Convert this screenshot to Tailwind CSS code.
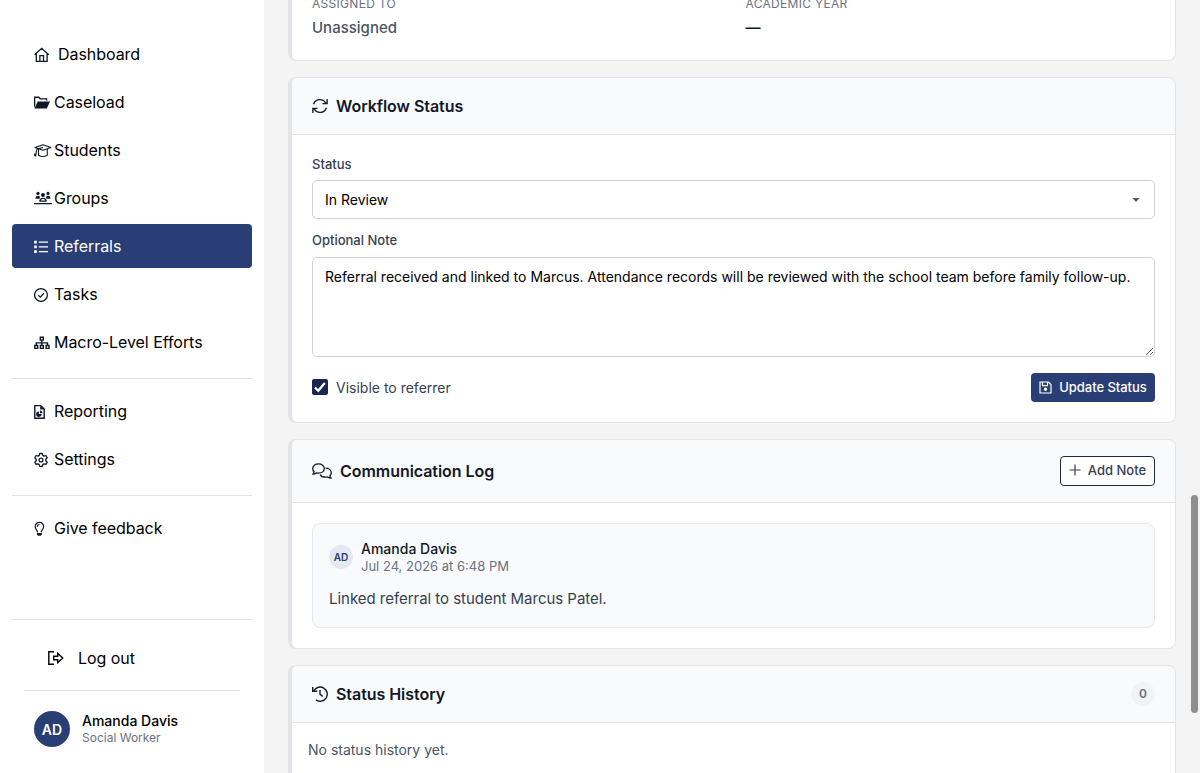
<!DOCTYPE html>
<html lang="en">

<head>
    <meta charset="UTF-8">
    <meta name="viewport" content="width=device-width, initial-scale=1.0">
    <title>Referrals</title>
    <script src="https://cdn.jsdelivr.net/npm/@tailwindcss/browser@4"></script>
</head>

<body class="h-screen overflow-hidden flex bg-[#f4f4f5] font-['Inter',sans-serif] text-[#111827]">
    <!-- sidebar -->
    <aside class="w-[264px] shrink-0 h-full bg-white px-3 pt-8 flex flex-col text-black">
        <nav class="flex flex-col gap-1 text-[16px] tracking-[-0.05px]">
            <a class="h-11 pl-[22px] flex items-center gap-2">
                <svg class="w-4 h-4 mt-px text-[#111827]" viewBox="0 0 16 16" fill="none" stroke="currentColor" stroke-width="1.3"><path d="M.6 7.700 7.700 1.300 14.800 7.700M2.300 6.500v7.800h10.800V6.500M5.900 14.200V8.700h3.600v5.500"/></svg>
                Dashboard
            </a>
            <a class="h-11 pl-[22px] flex items-center gap-1">
                <svg class="w-4 h-4 mt-px text-[#111827]" viewBox="0 0 16 16" fill="currentColor"><path d="M0 1.600h5l1.700 1.700h6.600v2.200H12V4.600H6.100L4.400 2.900H1.300v7.300L0 13z"/><path d="M3.700 6.400H16L12.800 13.600H.4z"/></svg>
                Caseload
            </a>
            <a class="h-11 pl-[22px] flex items-center gap-1">
                <svg class="w-[18px] h-4 mt-px -mr-0.5 text-[#111827]" viewBox="0 0 18 16" fill="none" stroke="currentColor" stroke-width="1.1" stroke-linejoin="round"><path d="M9 1.800 16.800 4.500 9 7.300 1 4.500zM4.500 6v6.300c2.600 1.500 6.200 1.500 8.800 0V6M9 4.500 3.200 6C2 7.600 2.300 10.500 1.600 13.300M.7 10.500v2.700"/></svg>
                Students
            </a>
            <a class="h-11 pl-[22px] flex items-center gap-1">
                <svg class="w-[18px] h-4 -mr-0.5 text-[#111827]" viewBox="0 0 18 16" fill="currentColor"><circle cx="4" cy="3.4" r="1.6"/><circle cx="14" cy="3.4" r="1.6"/><circle cx="9" cy="4.9" r="2"/><path d="M1.5 8.8c0-2 1-3 2.500-3 .9 0 1.500.3 1.900.8L5.700 8.800zM16.500 8.800c0-2-1-3-2.500-3-.9 0-1.500.3-1.900.8l.2 2.200zM0 13h18v1.300H0z"/><path fill-rule="evenodd" d="M5.200 11.700c0-2.600 1.400-4 3.800-4s3.800 1.400 3.800 4zM6.800 10.500h4.400c-.3-1-1-1.500-2.200-1.500s-1.900.5-2.200 1.500z"/></svg>
                Groups
            </a>
            <a class="h-11 pl-[22px] flex items-center gap-1 rounded-[4px] bg-[#293e75] text-white">
                <svg class="w-4 h-4 mt-px" viewBox="0 0 16 16" fill="currentColor"><path d="M.2 1.800h2.600v2.600H.2zM.2 6.600h2.600v2.600H.2zM.2 11.300h2.600v2.600H.2zM4.800 2.500H14v1.200H4.800zM4.800 7.300H14v1.200H4.800zM4.800 12H14v1.200H4.800z"/></svg>
                Referrals
            </a>
            <a class="h-11 pl-[22px] flex items-center gap-1">
                <svg class="w-4 h-4 mt-px text-[#111827]" viewBox="0 0 16 16" fill="none" stroke="currentColor" stroke-width="1.3"><circle cx="7" cy="8" r="6.400"/><path d="m4.200 8.100 2 2 3.700-3.800"/></svg>
                Tasks
            </a>
            <a class="h-11 pl-[22px] flex items-center gap-1">
                <svg class="w-4 h-4 mt-px text-[#111827]" viewBox="0 0 16 16" fill="none" stroke="currentColor" stroke-width="1.400"><path d="M6.300 2.200h3v2.900h-3zM.8 10.500h2.900v2.900H.8zM6.400 10.500h2.900v2.900H6.400zM12.100 10.500H15v2.900h-2.900zM7.800 5.100v5.400M2.300 10.500V7.900h11.200v2.600"/></svg>
                Macro-Level Efforts
            </a>
            <hr class="mt-2.5 mb-1.5 border-[#e2e3e5]">
            <a class="h-11 pl-[22px] flex items-center gap-1">
                <svg class="w-4 h-4 mt-px text-[#111827]" viewBox="0 0 16 16" fill="none" stroke="currentColor" stroke-width="1.400"><path d="M.8 1.600h6L10.200 5v9.200H.8z"/><path fill="currentColor" stroke="none" d="M6.200 1.200 10.600 5.600H6.200zM4.900 7.500v2.600h2.700A2.700 2.700 0 1 1 4.900 7.500zM5.900 6.500a2.700 2.700 0 0 1 2.600 2.700H5.900z"/></svg>
                Reporting
            </a>
            <a class="h-11 pl-[22px] flex items-center gap-1">
                <svg class="w-4 h-4 mt-px text-[#111827]" viewBox="0 0 16 16" fill="none" stroke="currentColor" stroke-width="1.300" stroke-linejoin="round"><path d="M5.700 1.500h2.600l.5 1.900 1.200.7 1.900-.6 1.300 2.300-1.400 1.400v1.500l1.400 1.400-1.300 2.300-1.900-.6-1.200.7-.5 1.900H5.700l-.5-1.900-1.200-.7-1.900.6-1.300-2.300 1.400-1.400V7.200L.8 5.800l1.300-2.300 1.900.6 1.200-.7z"/><circle cx="7" cy="8" r="1.900"/></svg>
                Settings
            </a>
            <hr class="mt-2.5 mb-1.5 border-[#e2e3e5]">
            <a class="h-11 pl-[22px] flex items-center gap-1">
                <svg class="w-4 h-4 mt-px text-[#111827]" viewBox="0 0 16 16" fill="none" stroke="currentColor" stroke-width="1.200"><path d="M3.600 11.400C3.500 9.200 1.200 8.400 1.200 5.500a4.200 4.200 0 0 1 8.400 0c0 2.900-2.300 3.700-2.400 5.900M3.300 5.700c0-1.300.8-2.100 2.100-2.200"/><path fill="currentColor" stroke="none" d="M3 11.900h4.800v1.300l-.9 1.500h-3L3 13.200z"/></svg>
                Give feedback
            </a>
        </nav>
        <div class="mt-auto border-t border-[#e2e3e5] px-3 pt-[15px] pb-[26px]">
            <a class="h-[46px] pl-6 flex items-center gap-[14px] text-[16px] tracking-[-0.05px]">
                <svg class="w-4 h-4" viewBox="0 0 16 16" fill="none" stroke="currentColor" stroke-width="1.400"><path d="M6 1.700H.8v12.600H6M5.700 6.200h4V3.300L14.700 8l-5 4.700V9.800h-4z"/></svg>
                Log out
            </a>
            <hr class="mt-[9px] border-[#e2e3e5]">
            <div class="mt-5 pl-2.5 flex items-center gap-3">
                <div class="w-9 h-9 rounded-full bg-[#293e75] text-white text-[14px] font-semibold flex items-center justify-center">AD</div>
                <div>
                    <p class="text-[14px] leading-[18px] font-medium">Amanda Davis</p>
                    <p class="text-[12px] leading-4 text-[#6b7280]">Social Worker</p>
                </div>
            </div>
        </div>
    </aside>

    <!-- referral detail -->
    <main class="relative flex-1 h-full overflow-hidden pl-6 pr-6 flex flex-col gap-4">
        <section class="h-[61px] shrink-0 bg-white border border-t-0 border-l-4 border-[#e3e4e8] rounded-b-[8px] px-5 grid grid-cols-2 gap-x-6">
            <div>
                <p class="-mt-1 text-[12px] leading-4 tracking-[0.3px] text-[#6b7280]">ASSIGNED TO</p>
                <p class="mt-1 text-[15px] leading-6 font-medium text-[#4b5563]">Unassigned</p>
            </div>
            <div>
                <p class="-mt-1 text-[12px] leading-4 tracking-[0.3px] text-[#6b7280]">ACADEMIC YEAR</p>
                <p class="mt-1 text-[15px] leading-6 font-medium text-[#111827]">—</p>
            </div>
        </section>

        <section class="h-[346px] shrink-0 bg-white border border-l-4 border-[#e3e4e8] rounded-[8px] overflow-hidden">
            <div class="h-[57px] px-5 flex items-center gap-2 bg-[#f8fafc] border-b border-[#e3e4e8]">
                <svg class="w-4 h-4" viewBox="0 0 16 16" fill="none" stroke="currentColor" stroke-width="1.400"><path d="M1.600 6.300A6.600 6.600 0 0 1 13.700 5M14.400 9.700A6.600 6.600 0 0 1 2.300 11"/><path fill="currentColor" stroke="none" d="M15.800 1v5.300h-5.300V5h3.200l.8-.9V1zM.2 15V9.700h5.300V11H2.300l-.8.9V15z"/></svg>
                <h2 class="text-[16px] font-semibold tracking-[-0.05px]">Workflow Status</h2>
            </div>
            <div class="px-5 pt-[19px]">
                <label class="block text-[13px] leading-5 font-medium text-[#374151]">Status</label>
                <div class="mt-[6px] h-[39px] px-3 flex items-center justify-between border border-[#cfd1d5] rounded-[5px] text-[14px] text-black">
                    In Review
                    <svg class="w-2 h-1 mr-[2px]" viewBox="0 0 8 4" fill="#555"><path d="M.5 0h7L4 4z"/></svg>
                </div>
                <label class="block mt-[11px] text-[13px] leading-5 font-medium text-[#374151]">Optional Note</label>
                <textarea class="block mt-[7px] w-full h-[100px] px-3 py-2 border border-[#cfd1d5] rounded-[5px] text-[14px] leading-[21px] text-black resize-y">Referral received and linked to Marcus. Attendance records will be reviewed with the school team before family follow-up.</textarea>
                <div class="mt-4 flex items-center justify-between">
                    <label class="flex items-center gap-2 text-[14px] text-[#374151]">
                        <span class="w-4 h-4 -mt-0.5 rounded-[2px] bg-[#1a2750] flex items-center justify-center">
                            <svg class="w-4 h-4" viewBox="0 0 16 16" fill="none" stroke="#fff" stroke-width="2.300"><path d="m3 8.500 3.200 3.200L12.800 4"/></svg>
                        </span>
                        Visible to referrer
                    </label>
                    <button class="w-[124px] h-[29px] flex items-center justify-center gap-[7px] rounded-[4px] bg-[#293e75] text-white text-[13px] font-medium tracking-[-0.04px]">
                        <svg class="w-[13px] h-[13px]" viewBox="0 0 13 13" fill="none" stroke="currentColor" stroke-width="1.200"><path d="M1 1h8.500L12 3.500V12H1zM3.500 1v3.700h5V1"/><circle cx="6.500" cy="8.200" r="1.100" fill="currentColor"/></svg>
                        Update Status
                    </button>
                </div>
            </div>
        </section>

        <section class="h-[210px] shrink-0 bg-white border border-l-4 border-[#e3e4e8] rounded-[8px] overflow-hidden">
            <div class="h-[63px] px-5 flex items-center justify-between bg-[#f8fafc] border-b border-[#e3e4e8]">
                <div class="flex items-center gap-2">
                    <svg class="w-5 h-4" viewBox="0 0 20 16" fill="none" stroke="currentColor" stroke-width="1.300" stroke-linejoin="round"><path d="M.8 11.200c.8-.8 1.200-1.600 1.300-2.500A4.300 4.300 0 0 1 .7 5.500C.7 2.800 3.200.9 6.500.9s5.800 1.900 5.800 4.600-2.500 4.700-5.800 4.700c-.8 0-1.500-.1-2.200-.3-1 .8-2.100 1.300-3.500 1.300z"/><path d="M13.500 5.200c3.300 0 5.800 1.900 5.800 4.500 0 1.200-.5 2.200-1.400 3 .1.900.6 1.700 1.300 2.500-1.400 0-2.500-.5-3.500-1.300-.7.200-1.400.3-2.200.3-2.400 0-4.500-1-5.400-2.600"/></svg>
                    <h2 class="text-[16px] font-semibold tracking-[-0.05px]">Communication Log</h2>
                </div>
                <button class="w-[95px] h-[30px] flex items-center justify-center gap-[7px] border border-[#1f2937] rounded-[4px] bg-white text-[#374151] text-[13px] font-medium">
                    <svg class="w-3 h-3 -mt-0.5" viewBox="0 0 12 12" fill="none" stroke="currentColor" stroke-width="1.200"><path d="M6 .5v11M.5 6h11"/></svg>
                    Add Note
                </button>
            </div>
            <div class="p-5">
                <div class="h-[105px] px-4 pt-4 bg-[#f8fafc] border border-[#e5e7eb] rounded-[8px]">
                    <div class="flex items-center gap-2">
                        <div class="w-6 h-6 rounded-full bg-[#e5e8f1] text-[#293e75] text-[10px] font-semibold flex items-center justify-center">AD</div>
                        <div>
                            <p class="text-[14px] leading-[18px] font-medium">Amanda Davis</p>
                            <p class="text-[13px] leading-4 text-[#6b7280]">Jul 24, 2026 at 6:48 PM</p>
                        </div>
                    </div>
                    <p class="mt-[13px] text-[15px] leading-6 tracking-[-0.03px] text-[#374151]">Linked referral to student Marcus Patel.</p>
                </div>
            </div>
        </section>

        <section class="h-[130px] shrink-0 bg-white border border-l-4 border-[#e3e4e8] rounded-[8px] overflow-hidden">
            <div class="h-[57px] px-5 flex items-center justify-between bg-[#f8fafc] border-b border-[#e3e4e8]">
                <div class="flex items-center gap-2">
                    <svg class="w-4 h-4" viewBox="0 0 16 16" fill="none" stroke="currentColor" stroke-width="1.400"><path d="M1.900 4.700A7.100 7.100 0 1 1 4 13.900M8 4v4.200l2.700 2.200"/><path fill="currentColor" stroke="none" d="M0 1h1.400v2.900l.8.700h3v1.400H0z"/></svg>
                    <h2 class="text-[16px] font-semibold tracking-[-0.05px]">Status History</h2>
                </div>
                <span class="w-6 h-6 rounded-full bg-[#f1f3f5] text-[#6b7280] text-[12px] font-semibold flex items-center justify-center">0</span>
            </div>
            <p class="px-4 pt-4 text-[14px] leading-[21px] text-[#4b5563]">No status history yet.</p>
        </section>

        <!-- scrollbar thumb -->
        <div class="absolute right-[2px] top-[495px] w-[7px] h-[218px] rounded-full bg-[#8f8f8f]"></div>
    </main>
</body>

</html>
